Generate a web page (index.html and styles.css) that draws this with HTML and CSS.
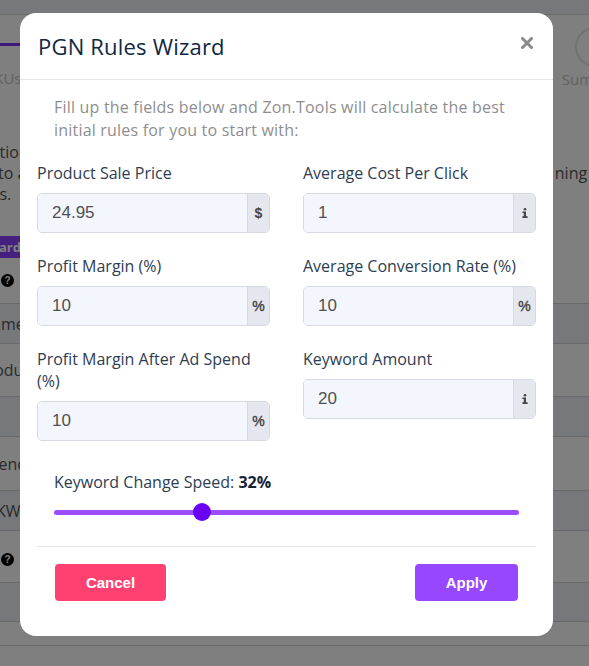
FILE: index.html
```
<!DOCTYPE html>
<html lang="en">
<head>
<meta charset="utf-8">
<title>PGN Rules Wizard</title>
<link rel="stylesheet" href="styles.css">
</head>
<body>
<div class="page">
  <div class="topbar"></div>
  <div class="stepper">
    <div class="step step-left">
      <div class="step-line"></div>
      <div class="step-label">SKUs</div>
    </div>
    <div class="step step-right">
      <div class="step-circle"></div>
      <div class="step-label">Summary</div>
    </div>
  </div>
  <div class="intro">
    <div class="intro-line">Creation of automation rules</div>
    <div class="intro-line split"><span>to apply the</span><span>ning t</span></div>
    <div class="intro-line">rules.</div>
  </div>
  <div class="wizard-btn">Wizard</div>
  <div class="help-row"><span class="help-icon">?</span></div>
  <div class="table">
    <div class="trow dark h40"><span class="cell">Name</span></div>
    <div class="trow h53"><span class="cell">Product</span></div>
    <div class="trow dark h40"></div>
    <div class="trow h54"><span class="cell">Spend</span></div>
    <div class="trow dark h40"><span class="cell">KW</span></div>
    <div class="trow h52"><span class="cell"><span class="help-icon">?</span></span></div>
    <div class="trow dark h39"></div>
    <div class="trow h24"></div>
  </div>
</div>

<div class="overlay"></div>

<div class="modal">
  <div class="modal-header">
    <h2 class="modal-title">PGN Rules Wizard</h2>
    <span class="close" aria-label="Close">
      <svg width="12" height="12" viewBox="0 0 12 12"><path d="M1.5 1.5 L10.5 10.5 M10.5 1.5 L1.5 10.5" stroke="#8a8a8a" stroke-width="3" stroke-linecap="square"/></svg>
    </span>
  </div>
  <div class="modal-body">
    <p class="desc">Fill up the fields below and Zon.Tools will calculate the best<br>initial rules for you to start with:</p>
    <div class="grid">
      <div class="col">
        <div class="field">
          <label class="label">Product Sale Price</label>
          <div class="input-group"><div class="input">24.95</div><div class="addon"><span class="addon-txt">$</span></div></div>
        </div>
        <div class="field">
          <label class="label">Profit Margin (%)</label>
          <div class="input-group"><div class="input">10</div><div class="addon"><span class="addon-txt pct">%</span></div></div>
        </div>
        <div class="field">
          <label class="label">Profit Margin After Ad Spend (%)</label>
          <div class="input-group"><div class="input">10</div><div class="addon"><span class="addon-txt pct">%</span></div></div>
        </div>
      </div>
      <div class="col">
        <div class="field">
          <label class="label">Average Cost Per Click</label>
          <div class="input-group"><div class="input">1</div><div class="addon">
            <svg class="info" width="6" height="10" viewBox="0 0 6 10"><circle cx="3" cy="1.3" r="1.3" fill="#444"/><path d="M0.4 3.4 H4 V8.3 H5.6 V10 H0.4 V8.3 H1.8 V5.1 H0.4 Z" fill="#444"/></svg>
          </div></div>
        </div>
        <div class="field">
          <label class="label">Average Conversion Rate (%)</label>
          <div class="input-group"><div class="input">10</div><div class="addon"><span class="addon-txt pct">%</span></div></div>
        </div>
        <div class="field">
          <label class="label">Keyword Amount</label>
          <div class="input-group"><div class="input">20</div><div class="addon">
            <svg class="info" width="6" height="10" viewBox="0 0 6 10"><circle cx="3" cy="1.3" r="1.3" fill="#444"/><path d="M0.4 3.4 H4 V8.3 H5.6 V10 H0.4 V8.3 H1.8 V5.1 H0.4 Z" fill="#444"/></svg>
          </div></div>
        </div>
      </div>
    </div>
    <div class="speed">
      <div class="speed-label">Keyword Change Speed: <b>32%</b></div>
      <input class="range" type="range" min="0" max="100" value="31">
    </div>
  </div>
  <div class="modal-footer">
    <button class="btn btn-cancel">Cancel</button>
    <button class="btn btn-apply">Apply</button>
  </div>
</div>
</body>
</html>
```
FILE: styles.css
```
html, body {
  margin: 0;
  padding: 0;
}
body {
  width: 589px;
  height: 666px;
  overflow: hidden;
  font-family: "Open Sans", "DejaVu Sans", sans-serif;
  background: #eef0f6;
  position: relative;
}

/* background page */
.page {
  height: 666px;
  overflow: hidden;
  background: #ffffff;
}
.topbar {
  height: 14px;
  background: #eef0f6;
  border-bottom: 1px solid #d4d4d4;
}
.stepper {
  display: flex;
  justify-content: space-between;
  height: 80px;
}
.step-left {
  margin-left: -14px;
  padding-top: 28px;
}
.step-line {
  width: 60px;
  height: 3px;
  background: #7a2ff0;
}
.step-label {
  font-size: 15px;
  color: #c4c4c4;
  margin-top: 22px;
}
.step-right {
  margin-right: -40px;
  padding-top: 12px;
  display: flex;
  flex-direction: column;
  align-items: center;
}
.step-right .step-label {
  margin-top: 2px;
}
.step-circle {
  width: 36px;
  height: 36px;
  border-radius: 50%;
  border: 2px solid #e4e4e4;
}
.intro {
  margin-top: 47px;
  font-size: 16px;
  line-height: 21px;
  color: #555;
}
.intro-line:first-child {
  margin-left: -35px;
}
.intro-line:last-child {
  margin-left: -30px;
}
.split {
  display: flex;
  justify-content: space-between;
  margin-right: -8px;
  margin-left: -2px;
}
.wizard-btn {
  margin-top: 31px;
  margin-left: -30px;
  width: 60px;
  height: 22px;
  line-height: 22px;
  background: #8a40ff;
  color: #fff;
  font-weight: 700;
  font-size: 13px;
  padding-left: 6px;
}
.help-row {
  height: 45px;
  display: flex;
  align-items: center;
  padding-left: 1px;
}
.help-icon {
  display: inline-flex;
  width: 13px;
  height: 13px;
  border-radius: 50%;
  background: #000;
  color: #fff;
  font-family: "Liberation Sans", sans-serif;
  font-weight: 700;
  font-size: 10px;
  align-items: center;
  justify-content: center;
}
.table {
  border-top: 1px solid #d0d0d0;
}
.trow {
  border-bottom: 1px solid #d0d0d0;
  display: flex;
  align-items: center;
  box-sizing: border-box;
  font-size: 16px;
  color: #555;
}
.trow.dark { background: #eef0f6; }
.h40 { height: 40px; }
.h53 { height: 53px; }
.h54 { height: 54px; }
.h52 { height: 52px; }
.h39 { height: 39px; }
.h24 { height: 24px; }
.cell { margin-left: -20px; }
.trow:nth-child(2) .cell { margin-left: -22px; }
.trow:nth-child(4) .cell { margin-left: -20px; }
.trow:nth-child(5) .cell { margin-left: -4px; }
.trow:nth-child(6) .cell { margin-left: 1px; }

.overlay {
  position: fixed;
  inset: 0;
  background: rgba(0, 0, 0, 0.5);
}

/* modal */
.modal {
  position: absolute;
  top: 13px;
  left: 20px;
  width: 533px;
  background: #fff;
  border-radius: 16px;
  color: #2e3d52;
}
.modal-header {
  height: 66px;
  border-bottom: 1px solid #e5e5e5;
  display: flex;
  align-items: center;
  justify-content: space-between;
  padding: 0 20px 0 18px;
}
.modal-title {
  margin: 0;
  font-size: 22px;
  font-weight: 500;
  letter-spacing: 0.2px;
  color: #0f2744;
  padding-bottom: 1px;
}
.close {
  display: flex;
  padding-bottom: 6px;
}
.modal-body {
  padding: 16px 17px 24px;
}
.desc {
  margin: 0;
  padding: 0 17px;
  font-size: 16px;
  line-height: 23px;
  color: #8e8e8e;
  letter-spacing: 0.2px;
}
.grid {
  margin-top: 20px;
  display: grid;
  grid-template-columns: 233px 233px;
  column-gap: 33px;
}
.field {
  margin-bottom: 22px;
}
.field:last-child {
  margin-bottom: 0;
}
.label {
  display: block;
  font-size: 16px;
  line-height: 22px;
  margin-bottom: 9px;
  color: #2e3d52;
}
.input-group {
  display: flex;
  height: 40px;
  box-sizing: border-box;
  border: 1px solid #d5d9e1;
  border-radius: 5px;
  overflow: hidden;
}
.input {
  flex: 1;
  background: #f3f6fd;
  font-family: "Liberation Sans", Arial, sans-serif;
  font-size: 17px;
  color: #505050;
  display: flex;
  align-items: center;
  padding-left: 14px;
}
.addon {
  width: 21px;
  background: #e4e7ed;
  border-left: 1px solid #d5d9e1;
  display: flex;
  align-items: center;
  justify-content: center;
}
.addon-txt {
  font-family: "Liberation Sans", Arial, sans-serif;
  font-weight: 700;
  font-size: 14px;
  color: #444;
}
.addon-txt.pct {
  font-weight: 400;
  font-size: 14px;
  -webkit-text-stroke: 0.4px #444;
}
.speed {
  margin-top: 30px;
  padding: 0 17px;
}
.speed-label {
  font-size: 16px;
  line-height: 22px;
  color: #2e3d52;
}
.speed-label b {
  font-weight: 700;
  color: #14233a;
}
.range {
  -webkit-appearance: none;
  appearance: none;
  display: block;
  width: 100%;
  height: 20px;
  margin: 9px 0 0;
  background: transparent;
}
.range::-webkit-slider-runnable-track {
  height: 5px;
  background: #9b4dff;
  border-radius: 3px;
}
.range::-webkit-slider-thumb {
  -webkit-appearance: none;
  width: 18px;
  height: 18px;
  border-radius: 50%;
  background: #6a00f4;
  border: none;
  margin-top: -6.5px;
}
.modal-footer {
  margin: 0 17px;
  border-top: 1px solid #e2e4ea;
  padding: 17px 18px 35px;
  display: flex;
  justify-content: space-between;
}
.btn {
  height: 37px;
  border: none;
  border-radius: 4px;
  color: #fff;
  font-family: "Liberation Sans", Arial, sans-serif;
  font-weight: 700;
  font-size: 15px;
  padding: 0;
}
.btn-cancel {
  width: 111px;
  background: #ff4171;
}
.btn-apply {
  width: 103px;
  background: #9747ff;
}
```
